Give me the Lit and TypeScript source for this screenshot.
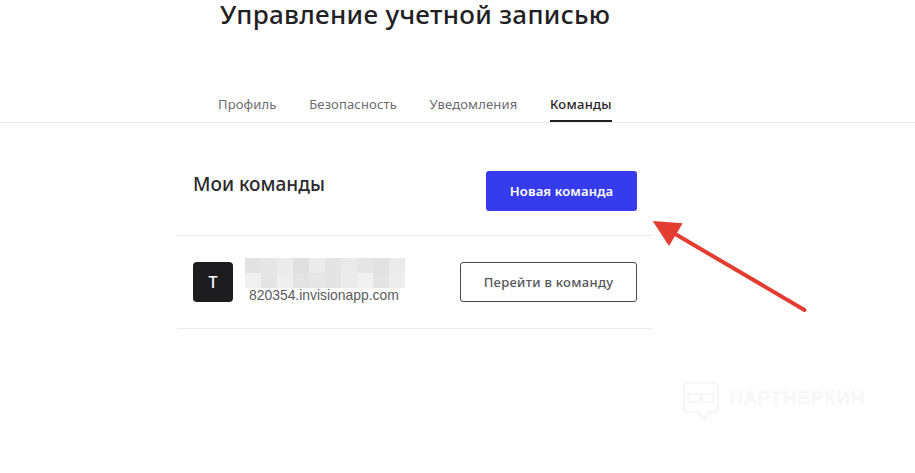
import { LitElement, html, css, svg } from "lit";
import { customElement } from "lit/decorators.js";

const PIXELS = [
  "#e2e2e2", "#e6e6e6", "#ebebeb", "#e0e0e0", "#ebebeb", "#e4e4e4", "#eaeaea", "#e5e5e5", "#e2e2e2", "#ebebeb",
  "#f0f0f0", "#e4e4e4", "#eeeeee", "#e3e3e3", "#e6e6e6", "#e3e3e3", "#ebebeb", "#f1f1f1", "#e4e4e4", "#ededed",
];

@customElement("app-root")
export class AppRoot extends LitElement {
  static styles = css`
    :host {
      display: block;
      position: relative;
      width: 915px;
      height: 473px;
      overflow: hidden;
      background: #fff;
      font-family: "Noto Sans", sans-serif;
      color: #1f1f24;
    }
    h1 {
      margin: 0;
      padding-left: 220px;
      height: 94px;
      font-size: 26px;
      line-height: 28px;
      font-weight: 500;
      letter-spacing: 0.3px;
    }
    .tabs {
      display: flex;
      gap: 32.7px;
      padding-left: 218px;
      height: 28px;
      border-bottom: 1px solid #eeeeee;
    }
    .tab {
      font-size: 13px;
      line-height: 20px;
      color: #6b6b70;
      letter-spacing: 0.14px;
    }
    .tab.active {
      color: #1f1f24;
      font-weight: 500;
      letter-spacing: 0.28px;
      border-bottom: 2px solid #1f1f24;
      height: 26px;
    }
    .panel {
      width: 476px;
      margin: 48px 0 0 177px;
    }
    .head {
      display: flex;
      justify-content: space-between;
      padding: 0 16px 24px;
      border-bottom: 1px solid #ececec;
    }
    h2 {
      margin: -1px 0 0;
      font-size: 19px;
      line-height: 28px;
      font-weight: 500;
      color: #2a2a2e;
    }
    .btn {
      box-sizing: border-box;
      display: flex;
      align-items: center;
      justify-content: center;
      width: 151px;
      height: 40px;
      border-radius: 3px;
      font-size: 13px;
      font-weight: 500;
    }
    .primary {
      background: #363bee;
      color: #fff;
      font-weight: 600;
      letter-spacing: 0.15px;
    }
    .secondary {
      border: 1px solid #4a4a4e;
      color: #55555a;
      width: 177px;
      letter-spacing: 0.3px;
    }
    .row {
      display: flex;
      align-items: center;
      padding: 26px 16px;
      border-bottom: 1px solid #ececec;
    }
    .avatar {
      display: flex;
      align-items: center;
      justify-content: center;
      width: 40px;
      height: 40px;
      border-radius: 4px;
      background: #1d1d1f;
      color: #fff;
      font-size: 16px;
      font-weight: 500;
    }
    .info {
      flex: 1;
      margin: -4px 0 0 12px;
    }
    .blur {
      display: grid;
      grid-template-columns: repeat(10, 16px);
      grid-auto-rows: 15px;
    }
    .domain {
      margin-left: 4px;
      font-family: "Liberation Sans", sans-serif;
      font-size: 13.9px;
      line-height: 14px;
      color: #5c5c60;
    }
    .arrow {
      position: absolute;
      left: 650px;
      top: 218px;
    }
    .mark {
      position: absolute;
      left: 683px;
      top: 382px;
      display: flex;
      gap: 11px;
    }
    .mark span {
      font-family: "Liberation Sans", sans-serif;
      font-size: 18px;
      line-height: 32px;
      letter-spacing: 1.5px;
      color: transparent;
      -webkit-text-stroke: 0.6px #f0f0f0;
    }
  `;

  render() {
    return html`
      <h1>Управление учетной записью</h1>
      <nav class="tabs">
        <div class="tab">Профиль</div>
        <div class="tab">Безопасность</div>
        <div class="tab">Уведомления</div>
        <div class="tab active">Команды</div>
      </nav>
      <section class="panel">
        <div class="head">
          <h2>Мои команды</h2>
          <div class="btn primary">Новая команда</div>
        </div>
        <div class="row">
          <div class="avatar">T</div>
          <div class="info">
            <div class="blur">
              ${PIXELS.map((c) => html`<i style="background:${c}"></i>`)}
            </div>
            <div class="domain">820354.invisionapp.com</div>
          </div>
          <div class="btn secondary">Перейти в команду</div>
        </div>
      </section>
      <svg class="arrow" width="160" height="96" viewBox="650 218 160 96">
        <path d="M804.5 310 L665 228" stroke="#e33d31" stroke-width="4" stroke-linecap="round" fill="none" />
        <path d="M652.7 221 L682.7 223.3 L669 246 Z" fill="#e33d31" />
      </svg>
      <div class="mark">
        <svg width="36" height="40" viewBox="0 0 36 40" fill="none" stroke="#f0f0f0" stroke-width="1.2">
          ${svg`<path d="M5 1 H31 Q35 1 35 5 V26 Q35 30 31 30 H25 L22 38 L15 30 H5 Q1 30 1 26 V5 Q1 1 5 1 Z" />
          <path d="M5 12 H30 M5 12 V18 Q5 20 7 20 H15 Q17 20 17 18 V15 H19 V18 Q19 20 21 20 H28 Q30 20 30 18 V12" />`}
        </svg>
        <span>ПАРТНЕРКИН</span>
      </div>
    `;
  }
}
